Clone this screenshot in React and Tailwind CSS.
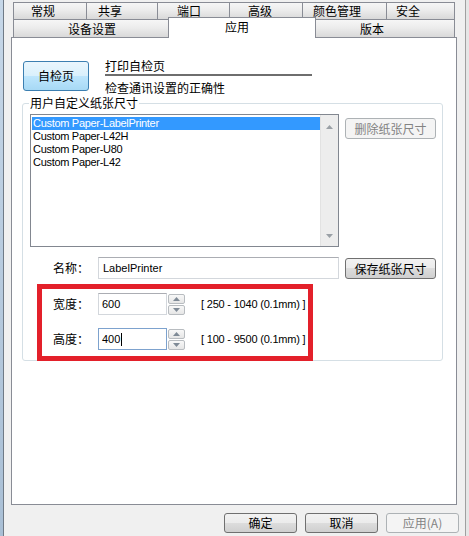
const row1 = [
  { label: '常规', cls: 'w-[73px] pl-[17px] border-l' },
  { label: '共享', cls: 'w-[71px] pl-[11px] border-l' },
  { label: '端口', cls: 'w-[72px] pl-[19px] border-l' },
  { label: '高级', cls: 'w-[73px] pl-[18px] border-l' },
  { label: '颜色管理', cls: 'w-[84px] pl-[10px] border-l' },
  { label: '安全', cls: 'w-[69px] pl-[9px] border-l border-r' },
];

const listItems = ['Custom Paper-LabelPrinter', 'Custom Paper-L42H', 'Custom Paper-U80', 'Custom Paper-L42'];

const latin = "font-['Liberation_Sans',Arial,sans-serif]";

function UpArrow({ color = '#9aa0a6' }) {
  return (
    <svg width="7" height="4" viewBox="0 0 7 4">
      <path d="M0 4 L3.5 0 L7 4 Z" fill={color} />
    </svg>
  );
}

function DownArrow({ color = '#9aa0a6' }) {
  return (
    <svg width="7" height="4" viewBox="0 0 7 4">
      <path d="M0 0 L7 0 L3.5 4 Z" fill={color} />
    </svg>
  );
}

function Spinner() {
  return (
    <div className="w-[17px] h-[21px] ml-[1px] flex flex-col">
      <div className="h-[10px] border border-[#b8bcc0] rounded-[2px] bg-[linear-gradient(#f8f8f8,#e6e6e6)] flex items-center justify-center">
        <UpArrow color="#7f8a96" />
      </div>
      <div className="h-[10px] mt-[1px] border border-[#b8bcc0] rounded-[2px] bg-[linear-gradient(#f8f8f8,#e6e6e6)] flex items-center justify-center">
        <DownArrow color="#7f8a96" />
      </div>
    </div>
  );
}

function Btn({ children, cls = '' }) {
  return (
    <div className={`rounded-[3px] border border-[#707070] bg-[linear-gradient(#f2f2f2,#ebebeb_50%,#dddddd_50%,#cfcfcf)] flex items-center justify-center leading-none ${cls}`}>
      {children}
    </div>
  );
}

export default function App() {
  return (
    <div className="w-[469px] h-[536px] bg-[#f0f0f0] flex overflow-hidden font-['Noto_Sans_CJK_SC',sans-serif] text-[12px] text-black">
      <div className="w-[3px] shrink-0 bg-[linear-gradient(#c6d7e8,#a9bfd5)]" />
      <div className="w-px shrink-0 bg-[#6f7a86]" />
      <div className="w-[461px] shrink-0 flex flex-col">
        <div className="ml-[7px] w-[446px]">
          {/* tab row 1 */}
          <div className="flex px-[2px] pt-[2px] h-[19px]">
            {row1.map((t) => (
              <div
                key={t.label}
                className={`h-[17px] border-t border-[#898c95] bg-[linear-gradient(#f6f6f6,#ececec_45%,#d9d9d9)] flex items-center leading-[14px] ${t.cls}`}
              >
                {t.label}
              </div>
            ))}
          </div>
          {/* tab row 2 */}
          <div className="flex px-[2px] h-[18px] items-end">
            <div className="w-[155px] h-[18px] pl-[54px] border-t border-l border-[#898c95] bg-[linear-gradient(#f6f6f6,#ececec_45%,#d9d9d9)] flex items-center leading-[14px]">
              设备设置
            </div>
            <div className="relative z-10 w-[148px] h-[21px] mb-[-1px] pl-[56px] pb-[2px] border-t border-l border-r border-[#898c95] bg-white flex items-center leading-[14px]">
              应用
            </div>
            <div className="w-[139px] h-[18px] pl-[44px] border-t border-r border-[#898c95] bg-[linear-gradient(#f6f6f6,#ececec_45%,#d9d9d9)] flex items-center leading-[14px]">
              版本
            </div>
          </div>
          {/* panel */}
          <div className="h-[468px] border border-[#898c95] bg-white">
            <div className="flex pl-[11px] pt-[20px]">
              <div className="w-[66px] h-[30px] mt-[3px] rounded-[3px] border border-[#3c7fb1] bg-[linear-gradient(#eaf6fd,#d9f0fc_50%,#bee6fd_50%,#a7d9f5)] flex items-center justify-center leading-none">
                自检页
              </div>
              <div className="ml-[16px] flex flex-col">
                <div className="leading-[16px] h-[16px]">打印自检页</div>
                <div className="w-[207px] h-[2px] bg-[#6e6e6e]" />
                <div className="leading-[16px] h-[16px] mt-[4px]">检查通讯设置的正确性</div>
              </div>
            </div>

            <fieldset className="ml-[10px] w-[421px] h-[265px] border border-[#d5dfe5] rounded-[3px]">
              <legend className="ml-[6px] px-[1px] leading-[14px]">用户自定义纸张尺寸</legend>

              <div className="flex pl-[7px] pt-[4px]">
                <div className="w-[309px] h-[133px] border border-[#828790] bg-white flex">
                  <div className={`flex-1 pl-[1px] pt-[2px] ${latin} text-[11px] leading-[13px] tracking-[-0.3px]`}>
                    {listItems.map((it, i) => (
                      <div key={it} className={i === 0 ? 'bg-[#3399ff] text-white pl-[1px]' : 'pl-[1px]'}>
                        {it}
                      </div>
                    ))}
                  </div>
                  <div className="w-[18px] bg-[#ededed] border-l border-[#e2e2e2] flex flex-col items-center justify-between pt-[10px] pb-[8px]">
                    <UpArrow />
                    <DownArrow />
                  </div>
                </div>
                <div className="ml-[6px] mt-[4px] w-[91px] h-[21px] rounded-[3px] border border-[#adb2b5] bg-[#f4f4f4] text-[#838383] flex items-center justify-center leading-none">
                  删除纸张尺寸
                </div>
              </div>

              <div className="flex items-start mt-[10px]">
                <div className="w-[75px] pl-[30px] h-[22px] flex items-center leading-none">名称：</div>
                <div className={`w-[241px] h-[22px] border border-[#d3d7dc] border-t-[#abadb3] pl-[4px] flex items-center ${latin} text-[11px] leading-none`}>
                  LabelPrinter
                </div>
                <Btn cls="ml-[6px] mt-[1px] w-[91px] h-[21px]">保存纸张尺寸</Btn>
              </div>

              <div className="ml-[14px] mt-[5px] w-[276px] h-[77px] border-[5px] border-[#e3202a]">
                <div className="flex items-center pt-[4px]">
                  <div className="w-[56px] pl-[11px] leading-none">宽度：</div>
                  <div className={`w-[69px] h-[22px] border border-[#d3d7dc] border-t-[#abadb3] pl-[3px] flex items-center ${latin} text-[11px] leading-none`}>
                    600
                  </div>
                  <Spinner />
                  <div className={`ml-[16px] ${latin} text-[11px] leading-none tracking-[-0.2px]`}>[ 250 - 1040 (0.1mm) ]</div>
                </div>
                <div className="flex items-center mt-[13px]">
                  <div className="w-[56px] pl-[11px] leading-none">高度：</div>
                  <div className={`w-[69px] h-[22px] border border-[#7da2ce] pl-[3px] flex items-center ${latin} text-[11px] leading-none`}>
                    400
                    <span className="inline-block w-px h-[13px] bg-black ml-px" />
                  </div>
                  <Spinner />
                  <div className={`ml-[16px] ${latin} text-[11px] leading-none tracking-[-0.2px]`}>[ 100 - 9500 (0.1mm) ]</div>
                </div>
              </div>
            </fieldset>
          </div>
        </div>
        <div className="flex justify-end gap-[8px] pr-[6px] mt-[8px]">
          <Btn cls="w-[73px] h-[20px]">确定</Btn>
          <Btn cls="w-[73px] h-[20px]">取消</Btn>
          <div className="w-[73px] h-[20px] rounded-[3px] border border-[#adb2b5] bg-[#f4f4f4] text-[#838383] flex items-center justify-center leading-none">
            应用(A)
          </div>
        </div>
      </div>
      <div className="w-px shrink-0 bg-[#a0a0a0]" />
      <div className="flex-1 bg-[#e6e6e6]" />
    </div>
  );
}
